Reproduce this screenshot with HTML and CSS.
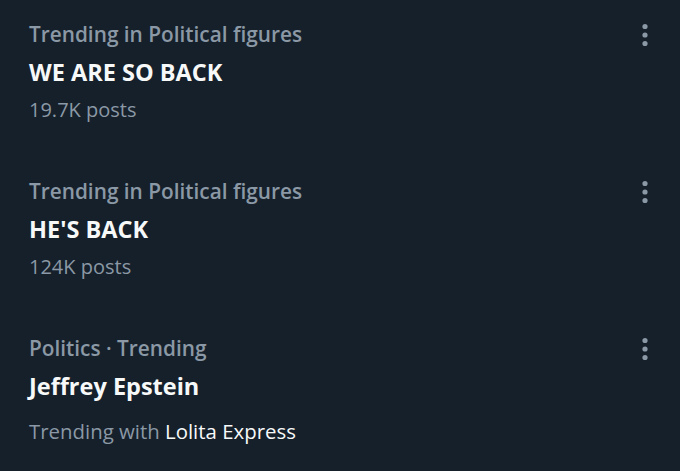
FILE: index.html
```html
<!DOCTYPE html>
<html>
  <head>
    <link rel="stylesheet" href="styles.css">
  </head>
  <body>
    <div class="trends">
      <div class="trend">
        <div class="trend-text">
          <div class="meta">Trending in Political figures</div>
          <div class="title">WE ARE SO BACK</div>
          <div class="count">19.7K posts</div>
        </div>
        <svg class="more" width="10" height="24" viewBox="0 0 10 24">
          <circle cx="5" cy="3.5" r="2.6" />
          <circle cx="5" cy="12" r="2.6" />
          <circle cx="5" cy="20.5" r="2.6" />
        </svg>
      </div>
      <div class="trend">
        <div class="trend-text">
          <div class="meta">Trending in Political figures</div>
          <div class="title">HE'S BACK</div>
          <div class="count">124K posts</div>
        </div>
        <svg class="more" width="10" height="24" viewBox="0 0 10 24">
          <circle cx="5" cy="3.5" r="2.6" />
          <circle cx="5" cy="12" r="2.6" />
          <circle cx="5" cy="20.5" r="2.6" />
        </svg>
      </div>
      <div class="trend">
        <div class="trend-text">
          <div class="meta">Politics · Trending</div>
          <div class="title">Jeffrey Epstein</div>
          <div class="count with">Trending with <span class="related">Lolita Express</span></div>
        </div>
        <svg class="more" width="10" height="24" viewBox="0 0 10 24">
          <circle cx="5" cy="3.5" r="2.6" />
          <circle cx="5" cy="12" r="2.6" />
          <circle cx="5" cy="20.5" r="2.6" />
        </svg>
      </div>
    </div>
  </body>
</html>
```

FILE: styles.css
```css
body {
  margin: 0;
  background-color: #15202b;
  font-family: "Open Sans", "Noto Sans", sans-serif;
  color: #f7f9f9;
}

.trends {
  display: flex;
  flex-direction: column;
  padding: 20px 30px 0 29px;
}

.trend {
  display: flex;
  justify-content: space-between;
  align-items: flex-start;
  flex-shrink: 0;
  height: 157px;
}

.meta {
  font-size: 20.8px;
  font-weight: 600;
  color: #8b98a5;
  line-height: 28px;
}

.title {
  font-size: 23.5px;
  font-weight: 700;
  line-height: 28px;
  margin-top: 10px;
}

.count {
  font-size: 20px;
  color: #8b98a5;
  line-height: 28px;
  margin-top: 10px;
}

.count.with {
  font-size: 20.4px;
  margin-top: 17px;
}

.related {
  color: #f7f9f9;
}

.more {
  fill: #8b98a5;
  margin-top: 3px;
}
```
